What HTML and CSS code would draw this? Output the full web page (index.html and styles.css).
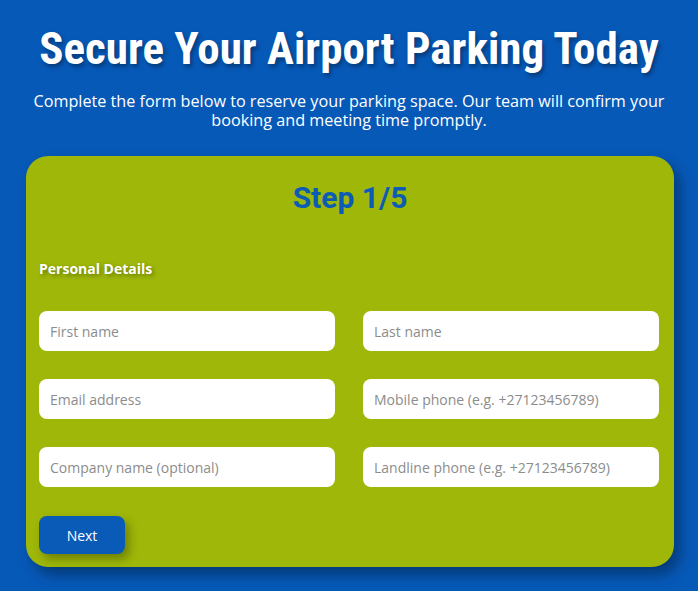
FILE: index.html
```html
<!DOCTYPE html>
<html lang="en">
<head>
<meta charset="utf-8">
<title>Secure Your Airport Parking Today</title>
<link rel="stylesheet" href="styles.css">
</head>
<body>
<header class="hero">
  <h1 class="title">Secure Your Airport Parking Today</h1>
  <p class="lead">Complete the form below to reserve your parking space. Our team will confirm your booking and meeting time promptly.</p>
</header>
<main class="card">
  <h2 class="step">Step 1/5</h2>
  <h3 class="section">Personal Details</h3>
  <form class="grid">
    <input class="field" type="text" placeholder="First name">
    <input class="field" type="text" placeholder="Last name">
    <input class="field" type="email" placeholder="Email address">
    <input class="field" type="tel" placeholder="Mobile phone (e.g. +27123456789)">
    <input class="field" type="text" placeholder="Company name (optional)">
    <input class="field" type="tel" placeholder="Landline phone (e.g. +27123456789)">
  </form>
  <button class="next" type="button">Next</button>
</main>
</body>
</html>
```
FILE: styles.css
```css
* { box-sizing: border-box; }
html, body { margin: 0; padding: 0; }
body {
  background: #0759b8;
  font-family: "Open Sans", "Liberation Sans", sans-serif;
  width: 698px;
  height: 591px;
  overflow: hidden;
}
.hero {
  padding: 23px 10px 0;
  text-align: center;
  color: #fff;
}
.title {
  margin: 0;
  font-family: "Roboto", sans-serif;
  font-stretch: condensed;
  font-weight: 700;
  font-size: 45px;
  line-height: 52px;
  text-shadow: 2px 3px 4px rgba(0,0,0,0.35);
}
.lead {
  margin: 17px auto 0;
  font-size: 16.2px;
  line-height: 19px;
  max-width: 670px;
}
.card {
  margin: 26px 24px 0 26px;
  background: #9eb708;
  border-radius: 22px;
  padding: 22px 13px 13px;
  box-shadow: 6px 8px 14px rgba(0,0,0,0.35);
  height: 411px;
}
.step {
  margin: 0;
  text-align: center;
  color: #0b5cb4;
  font-family: "Roboto", sans-serif;
  font-weight: 700;
  font-size: 30px;
  line-height: 40px;
}
.section {
  margin: 41px 0 0;
  color: #fff;
  font-size: 14px;
  font-weight: 700;
  line-height: 20px;
  text-shadow: 2px 2px 4px rgba(0,0,0,0.35);
}
.grid {
  margin-top: 32px;
  display: grid;
  grid-template-columns: 296px 296px;
  column-gap: 28px;
  row-gap: 28px;
}
.field {
  height: 40px;
  border: none;
  border-radius: 8px;
  background: #fff;
  padding: 0 11px;
  font-family: "Open Sans", sans-serif;
  font-size: 14px;
  color: #333;
  outline: none;
}
.field::placeholder { color: #8c8c8c; }
.next {
  display: block;
  margin-top: 29px;
  width: 86px;
  height: 38px;
  border: none;
  border-radius: 8px;
  background: #0a5bb8;
  color: #fff;
  font-family: "Open Sans", sans-serif;
  font-size: 14px;
  font-weight: 500;
  box-shadow: 4px 5px 10px rgba(0,0,0,0.3);
}
```
